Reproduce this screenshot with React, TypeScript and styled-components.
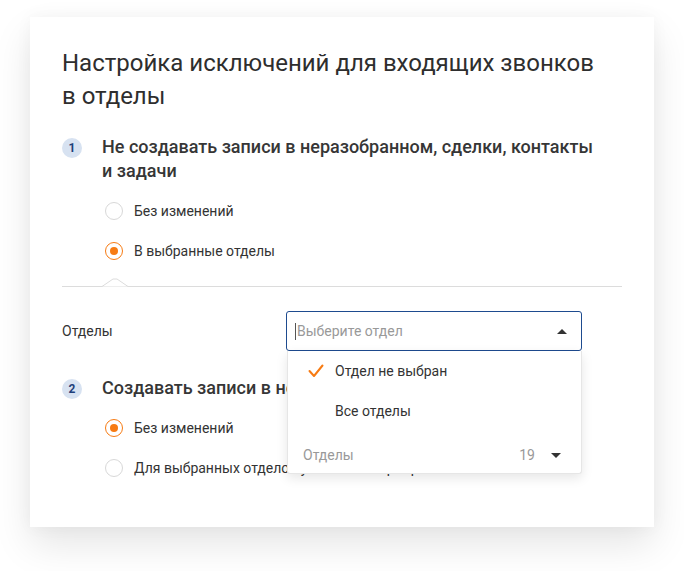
import React from 'react';
import styled, { createGlobalStyle } from 'styled-components';

const COLORS = {
  text: '#333333',
  muted: '#999999',
  line: '#dcdcdc',
  orange: '#f77b13',
  blue: '#1e4b8f',
  badgeBg: '#d7e2f1',
  badgeText: '#1f3f7a',
};

const GlobalStyle = createGlobalStyle`
  html, body {
    margin: 0;
    padding: 0;
    background: #ffffff;
    font-family: Roboto, 'Noto Sans', Arial, sans-serif;
    color: ${COLORS.text};
  }
  * { box-sizing: border-box; }
`;

interface IOption {
  label: string;
  checked?: boolean;
}

const Radio: React.FC<IOption> = ({ label, checked }) => (
  <RadioRow>
    <RadioCircle $checked={checked} />
    <RadioLabel>{label}</RadioLabel>
  </RadioRow>
);

const SectionHead: React.FC<{ num: number; children: React.ReactNode }> = ({ num, children }) => (
  <HeadRow>
    <Badge>{num}</Badge>
    <HeadText>{children}</HeadText>
  </HeadRow>
);

export default function App() {
  return (
    <Page>
      <GlobalStyle />
      <Card>
        <Title>
          Настройка исключений для входящих звонков
          <br />в отделы
        </Title>

        <Section>
          <SectionHead num={1}>
            Не создавать записи в неразобранном, сделки, контакты
            <br />и задачи
          </SectionHead>
          <Options>
            <Radio label="Без изменений" />
            <Radio label="В выбранные отделы" checked />
          </Options>
        </Section>

        <Divider>
          <Notch width="26" height="9" viewBox="0 0 26 9">
            <polyline points="0,8.5 11,1 15,1 26,8.5" fill="#fff" stroke={COLORS.line} strokeWidth="1" />
          </Notch>
        </Divider>

        <FieldRow>
          <FieldLabel>Отделы</FieldLabel>
          <SelectWrap>
            <SelectBox>
              <Caret />
              <Placeholder>Выберите отдел</Placeholder>
              <Triangle $up />
            </SelectBox>
            <Menu>
              <MenuItem>
                <CheckSlot>
                  <svg width="16" height="14" viewBox="0 0 16 14">
                    <polyline
                      points="1.5,7 6,12 14.5,1.5"
                      fill="none"
                      stroke={COLORS.orange}
                      strokeWidth="2"
                      strokeLinecap="round"
                      strokeLinejoin="round"
                    />
                  </svg>
                </CheckSlot>
                Отдел не выбран
              </MenuItem>
              <MenuItem>
                <CheckSlot />
                Все отделы
              </MenuItem>
              <MenuGroup>
                <span>Отделы</span>
                <GroupRight>
                  <span>19</span>
                  <Triangle />
                </GroupRight>
              </MenuGroup>
            </Menu>
          </SelectWrap>
        </FieldRow>

        <Section $second>
          <SectionHead num={2}>Создавать записи в неразобранном для отделов</SectionHead>
          <Options>
            <Radio label="Без изменений" checked />
            <Radio label="Для выбранных отделов установить приоритет" />
          </Options>
        </Section>
      </Card>
    </Page>
  );
}

const Page = styled.div`
  padding: 17px 30px 45px;
  min-height: 571px;
`;

const Card = styled.div`
  width: 624px;
  padding: 30px 32px 39px;
  background: #fff;
  box-shadow: 0 18px 36px rgba(0, 0, 0, 0.1), 0 0 16px rgba(0, 0, 0, 0.04);
`;

const Title = styled.h1`
  margin: 0;
  font-size: 24px;
  line-height: 33px;
  font-weight: 400;
  color: #2e2e2e;
`;

const Section = styled.div<{ $second?: boolean }>`
  margin-top: ${(p) => (p.$second ? '25px' : '22px')};
`;

const HeadRow = styled.div`
  display: flex;
  align-items: flex-start;
  gap: 20px;
`;

const Badge = styled.div`
  flex: none;
  width: 20px;
  height: 20px;
  margin-top: 3px;
  border-radius: 50%;
  background: ${COLORS.badgeBg};
  color: ${COLORS.badgeText};
  font-size: 12px;
  font-weight: 700;
  display: flex;
  align-items: center;
  justify-content: center;
`;

const HeadText = styled.div`
  font-size: 18px;
  line-height: 24px;
  font-weight: 500;
  color: #363636;
`;

const Options = styled.div`
  margin-top: 8px;
  padding-left: 43px;
`;

const RadioRow = styled.div`
  display: flex;
  align-items: center;
  gap: 11px;
  height: 40px;
`;

const RadioCircle = styled.span<{ $checked?: boolean }>`
  flex: none;
  width: 18px;
  height: 18px;
  border-radius: 50%;
  border: 1px solid ${(p) => (p.$checked ? COLORS.orange : '#d8d8d8')};
  display: flex;
  align-items: center;
  justify-content: center;
  &::after {
    content: '';
    display: ${(p) => (p.$checked ? 'block' : 'none')};
    width: 8px;
    height: 8px;
    border-radius: 50%;
    background: ${COLORS.orange};
  }
`;

const RadioLabel = styled.span`
  font-size: 14px;
  color: ${COLORS.text};
  white-space: nowrap;
`;

const Divider = styled.div`
  position: relative;
  margin-top: 15px;
  height: 1px;
  background: ${COLORS.line};
`;

const Notch = styled.svg`
  position: absolute;
  left: 40px;
  top: -8px;
  display: block;
`;

const FieldRow = styled.div`
  display: flex;
  align-items: center;
  margin-top: 24px;
`;

const FieldLabel = styled.div`
  width: 224px;
  font-size: 14px;
  color: ${COLORS.text};
`;

const SelectWrap = styled.div`
  position: relative;
  width: 296px;
`;

const SelectBox = styled.div`
  height: 40px;
  border: 1px solid ${COLORS.blue};
  border-radius: 3px;
  display: flex;
  align-items: center;
  padding: 0 14px 0 8px;
`;

const Caret = styled.span`
  width: 1px;
  height: 17px;
  background: #555;
`;

const Placeholder = styled.span`
  flex: 1;
  margin-left: 1px;
  font-size: 14px;
  color: ${COLORS.muted};
`;

const Triangle = styled.span<{ $up?: boolean }>`
  width: 0;
  height: 0;
  border-left: 5px solid transparent;
  border-right: 5px solid transparent;
  ${(p) => (p.$up ? `border-bottom: 5px solid ${COLORS.text};` : `border-top: 5px solid ${COLORS.text};`)}
`;

const Menu = styled.div`
  position: absolute;
  top: 40px;
  left: 1px;
  right: 0;
  background: #fff;
  border: 1px solid #e6e6e6;
  border-top: none;
  border-radius: 0 0 3px 3px;
  box-shadow: 0 4px 12px rgba(0, 0, 0, 0.1);
  z-index: 2;
`;

const MenuItem = styled.div`
  height: 40px;
  display: flex;
  align-items: center;
  font-size: 14px;
  color: ${COLORS.text};
`;

const CheckSlot = styled.span`
  width: 47px;
  padding-left: 20px;
  display: flex;
  align-items: center;
`;

const MenuGroup = styled.div`
  height: 42px;
  padding: 12px 20px 6px 15px;
  display: flex;
  align-items: center;
  justify-content: space-between;
  font-size: 14px;
  color: ${COLORS.muted};
`;

const GroupRight = styled.div`
  display: flex;
  align-items: center;
  gap: 16px;
`;
